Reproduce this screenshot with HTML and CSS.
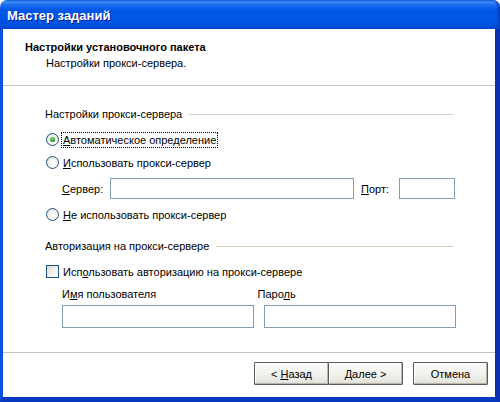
FILE: index.html
```html
<!DOCTYPE html>
<html>
<head>
<meta charset="utf-8">
<link rel="stylesheet" href="styles.css">
</head>
<body>
<div class="window">
  <div class="titlebar"><span class="title">Мастер заданий</span></div>
  <div class="frame">
    <div class="header">
      <div class="h-title">Настройки установочного пакета</div>
      <div class="h-sub">Настройки прокси-сервера.</div>
    </div>
    <div class="content">
      <div class="group-head g1"><span>Настройки прокси-сервера</span><i class="rule"></i></div>
      <div class="opt r1"><span class="radio checked"></span><span class="lbl focus"><u>А</u>втоматическое определение</span></div>
      <div class="opt"><span class="radio"></span><span class="lbl"><u>И</u>спользовать прокси-сервер</span></div>
      <div class="server-row">
        <span class="fl"><u>С</u>ервер:</span>
        <span class="input server"></span>
        <span class="fl port-l"><u>П</u>орт:</span>
        <span class="input port"></span>
      </div>
      <div class="opt r3"><span class="radio"></span><span class="lbl"><u>Н</u>е использовать прокси-сервер</span></div>
      <div class="group-head g2"><span>Авторизация на прокси-сервере</span><i class="rule"></i></div>
      <div class="opt chk-row"><span class="check"></span><span class="lbl">Исп<u>о</u>льзовать авторизацию на прокси-сервере</span></div>
      <div class="cred-labels">
        <span class="cl">И<u>м</u>я пользователя</span>
        <span class="cl">Паро<u>л</u>ь</span>
      </div>
      <div class="cred-inputs">
        <span class="input cred"></span>
        <span class="input cred"></span>
      </div>
    </div>
    <div class="footer">
      <button class="btn">&lt; <u>Н</u>азад</button>
      <button class="btn next"><u>Д</u>алее &gt;</button>
      <button class="btn cancel">Отмена</button>
    </div>
  </div>
</div>
</body>
</html>
```

FILE: styles.css
```css
html, body {
  margin: 0;
  padding: 0;
  background: #ffffff;
}
.window {
  width: 500px;
  height: 402px;
  display: flex;
  flex-direction: column;
  font-family: "Liberation Sans", Arial, sans-serif;
  font-size: 11px;
  color: #000;
}
.titlebar {
  height: 29px;
  flex: none;
  border-radius: 7px 7px 0 0;
  background: linear-gradient(#0a5de0 0px, #3f8cf3 2px, #1a6bf0 5px, #0457e6 10px, #0055e5 20px, #0050dc 26px, #0046c8 29px);
  display: flex;
  align-items: center;
  padding-left: 7px;
  box-shadow: inset -3px 0 2px -1px #0a3fb8;
}
.title {
  color: #fff;
  font-family: "Liberation Sans", Arial, sans-serif;
  font-weight: bold;
  font-size: 13px;
  text-shadow: 1px 1px 0 #0a1e8c;
  margin-top: 1px;
}
.frame {
  flex: 1;
  display: flex;
  flex-direction: column;
  border-left: 3px solid #0553e0;
  border-right: 5px solid #0a2fb0;
  border-bottom: 5px solid #0838c0;
  background: #ffffff;
}
.header {
  height: 57px;
  flex: none;
  background: #fff;
  border-bottom: 1px solid #c8c5b8;
  box-shadow: 0 1px 0 #ffffff;
  box-sizing: border-box;
  padding: 10px 0 0 22px;
}
.h-title {
  font-weight: bold;
  height: 16px;
  line-height: 16px;
}
.h-sub {
  padding-left: 21px;
  height: 16px;
  line-height: 16px;
}
.content {
  flex: 1;
  padding: 0 42px;
  display: flex;
  flex-direction: column;
}
.group-head {
  height: 14px;
  display: flex;
  align-items: center;
}
.group-head.g1 { margin-top: 21px; }
.group-head.g2 { margin-top: 13px; }
.rule {
  flex: 1;
  height: 0;
  border-top: 1px solid #d0d0bf;
  margin-left: 7px;
}
.opt {
  height: 23px;
  display: flex;
  align-items: center;
  padding-left: 1px;
}
.opt.r1 { margin-top: 7px; }
.opt.r3 { margin-top: 4px; }
.opt.chk-row { margin-top: 7px; }
.radio {
  width: 11px;
  height: 11px;
  border: 1px solid #1c5180;
  border-radius: 50%;
  background: radial-gradient(circle at 60% 65%, #ffffff 0, #f4f4f0 40%, #dcdcd7 100%);
  position: relative;
  flex: none;
}
.radio.checked::after {
  content: "";
  position: absolute;
  left: 3px;
  top: 3px;
  width: 5px;
  height: 5px;
  border-radius: 50%;
  background: radial-gradient(circle at 40% 35%, #7ee07e 0, #21a121 60%, #148014 100%);
}
.check {
  width: 11px;
  height: 11px;
  border: 1px solid #1c5180;
  background: linear-gradient(135deg, #dcdcd7 0, #f4f4f0 60%, #ffffff 100%);
  flex: none;
}
.lbl {
  margin-left: 2px;
  padding: 1px 1px;
  border: 1px dotted transparent;
}
.lbl.focus {
  border-color: #000;
}
.server-row {
  margin-top: 4px;
  height: 21px;
  display: flex;
  align-items: center;
  padding-left: 17px;
}
.fl { width: 48px; flex: none; }
.fl.port-l { width: 38px; margin-left: 7px; }
.input {
  display: block;
  box-sizing: border-box;
  border: 1px solid #7f9db9;
  background: #fff;
  flex: none;
}
.input.server { width: 244px; height: 21px; }
.input.port { width: 56px; height: 21px; }
.cred-labels {
  margin-top: 4px;
  height: 14px;
  display: flex;
  align-items: center;
  padding-left: 17px;
}
.cl { width: 202px; }
.cred-inputs {
  margin-top: 4px;
  display: flex;
  padding-left: 17px;
  gap: 10px;
}
.input.cred { width: 192px; height: 23px; }
.footer {
  height: 45px;
  flex: none;
  border-top: 1px solid #c8c5b8;
  box-shadow: inset 0 1px 0 #ffffff;
  display: flex;
  align-items: flex-start;
  padding: 9px 0 0 251px;
  box-sizing: border-box;
}
.btn {
  width: 75px;
  height: 23px;
  box-sizing: border-box;
  font-family: "Liberation Sans", Arial, sans-serif;
  font-size: 11px;
  color: #000;
  border: 1px solid #5a5a5a;
  border-radius: 1px;
  background: linear-gradient(#fbfbfa 0, #f2f2ee 50%, #e6e5df 90%, #d6d3c8 100%);
  box-shadow: inset -1px -1px 0 #b8b5aa, inset 1px 1px 0 #ffffff;
  padding: 0;
  margin: 0;
}
.btn.next { margin-left: -1px; }
.btn.cancel { margin-left: 10px; }
```
